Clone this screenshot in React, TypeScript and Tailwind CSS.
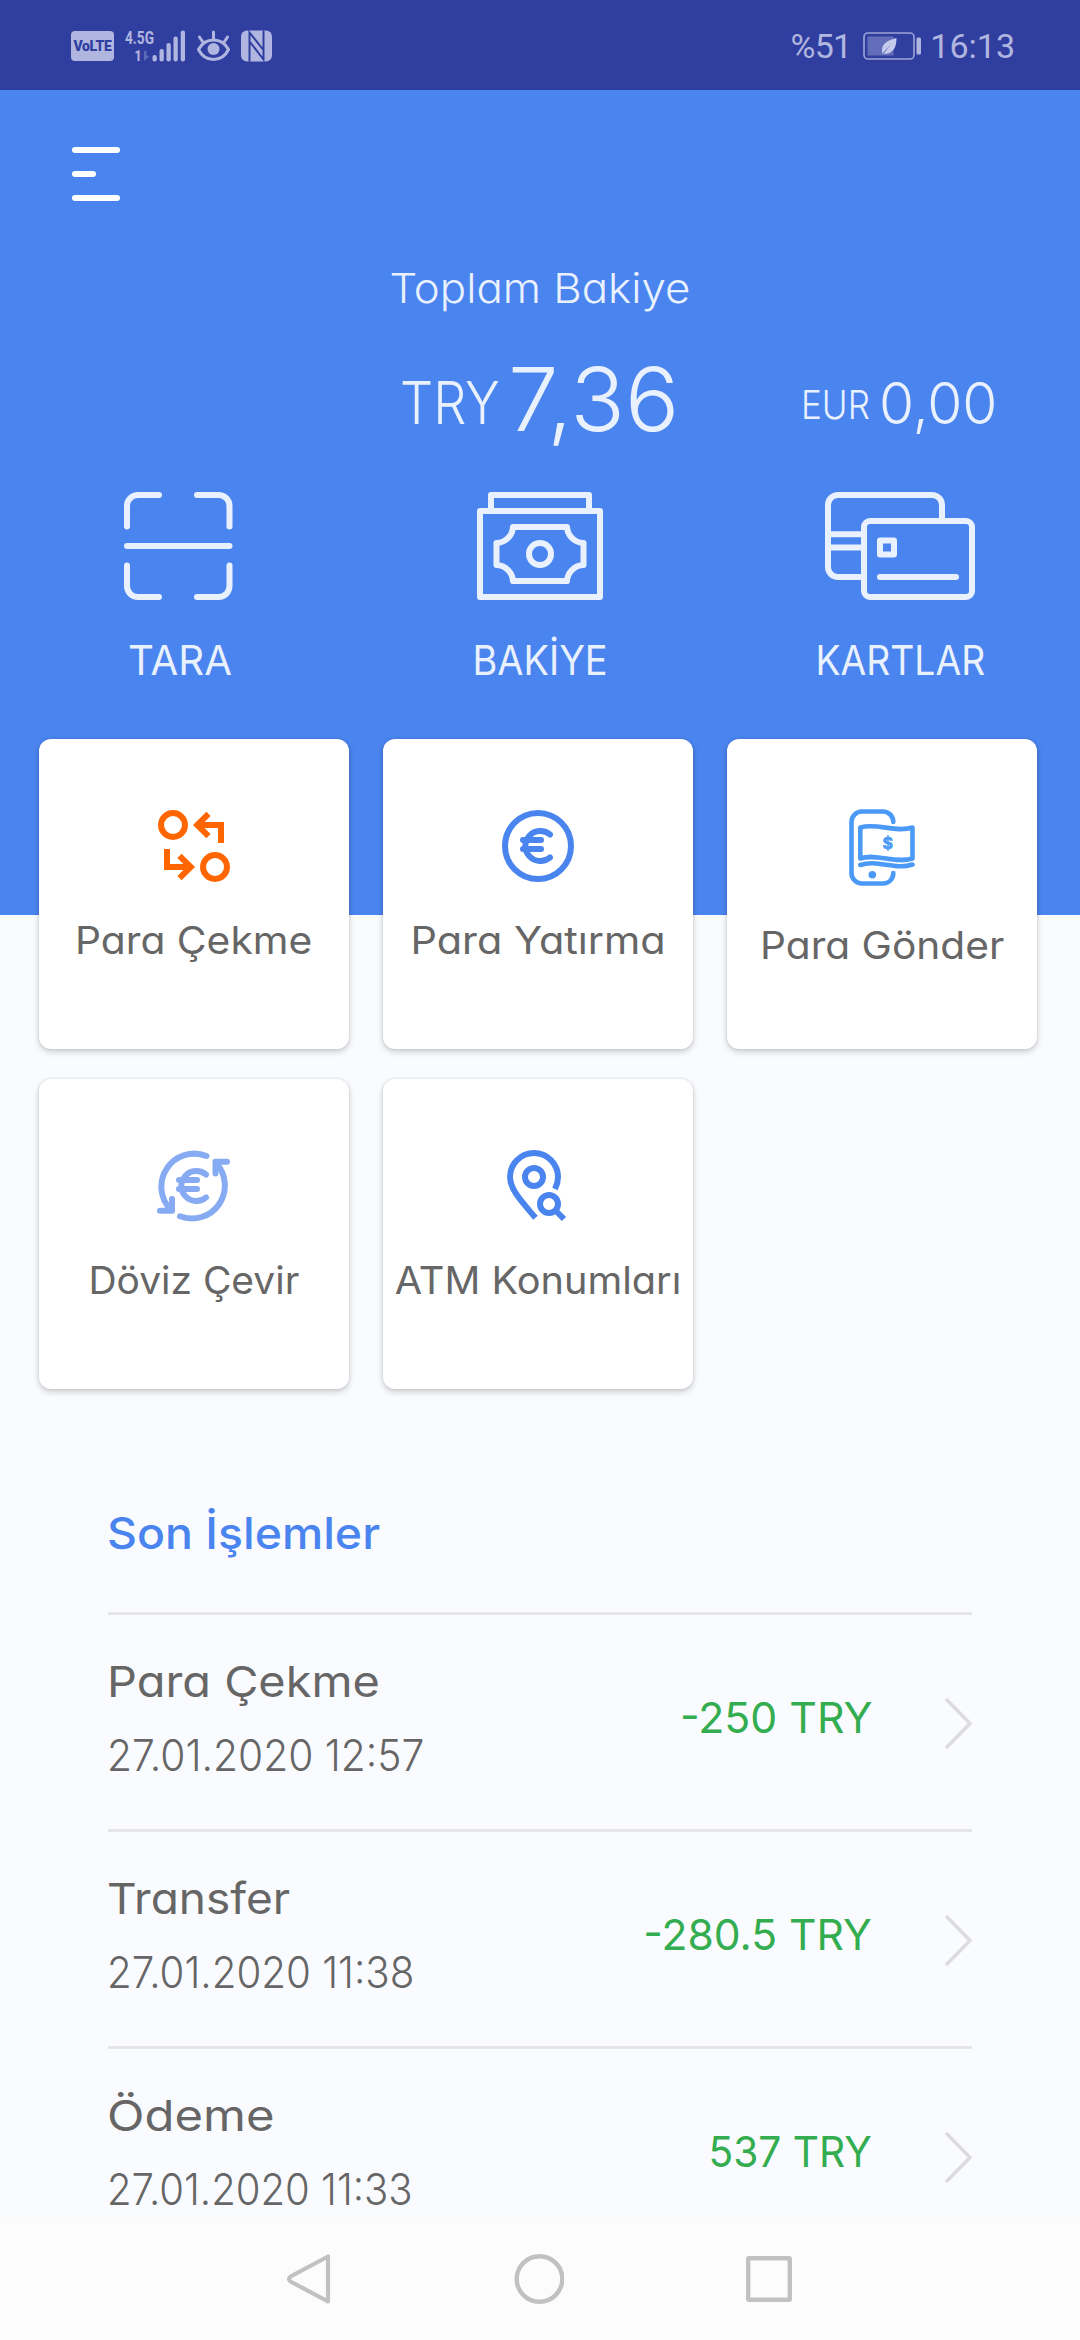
import type { ReactNode } from "react";

const ScanIcon = () => (
  <svg width="112" height="108" viewBox="0 0 112 108" fill="none" stroke="currentColor" strokeWidth="6" strokeLinecap="round" strokeLinejoin="round">
    <path d="M35 3H14A11 11 0 0 0 3 14V34.5M73 3H94.5A11 11 0 0 1 105.5 14V34.5M3 73.5V94A11 11 0 0 0 14 105H35M105.5 73.5V94A11 11 0 0 1 94.5 105H73M3 54H105.5" />
  </svg>
);

const CashIcon = () => (
  <svg width="126" height="108" viewBox="0 0 126 108" fill="none" stroke="currentColor" strokeWidth="6" strokeLinecap="round" strokeLinejoin="round">
    <path d="M14 19V3H112V19M3 19H123V105H3ZM36 35H90A17 17 0 0 0 106.500 51V73A17 17 0 0 0 90 89H36A17 17 0 0 0 19.500 73V51A17 17 0 0 0 36 35Z" />
    <circle cx="63" cy="62" r="11" />
  </svg>
);

const CardsIcon = () => (
  <svg width="150" height="108" viewBox="0 0 150 108" fill="none" stroke="currentColor" strokeWidth="6" strokeLinecap="round" strokeLinejoin="round">
    <path d="M117 28V13A10 10 0 0 0 107 3H13A10 10 0 0 0 3 13V75A10 10 0 0 0 13 85H38M4 42.300H38M4 55.500H38M55 85H131" />
    <rect x="39" y="29" width="108" height="76" rx="6" />
    <rect x="55" y="48.500" width="14" height="14" />
  </svg>
);

const SwapIcon = () => (
  <svg width="72" height="72" viewBox="0 0 72 72" fill="none" stroke="#ff6600" strokeWidth="6">
    <circle cx="15" cy="15" r="12" />
    <circle cx="57" cy="57" r="12" />
    <path d="M63 33V15H40M50.500 3.800L39.200 15L50.500 26.200M9 39V57H32M21.500 45.800L32.800 57L21.500 68.200" />
  </svg>
);

const EuroIcon = () => (
  <svg width="72" height="72" viewBox="0 0 72 72" fill="none" stroke="#4a84ee" strokeWidth="6" strokeLinecap="round">
    <circle cx="36" cy="36" r="33" />
    <path d="M48 24.500A15 15 0 1 0 48 47.500M21 30H39M21 39H39" />
  </svg>
);

const PhoneMoneyIcon = () => (
  <svg width="66" height="77" viewBox="0 0 66 77" fill="none" stroke="#4b9af8" strokeWidth="4.600" strokeLinecap="round" strokeLinejoin="round">
    <path d="M44.300 13C44.300 7 39.500 2.500 34 2.500H13A10.500 10.500 0 0 0 2.500 13V64A10.500 10.500 0 0 0 13 74.500H34C40 74.500 44.300 70 44.300 64" />
    <path d="M11.300 18.500C28 13.500 46 24 63.500 18.500V49.500C46 55 28 44 11.300 49.500Z" />
    <path d="M11.300 56C28 50 46 61.500 63.500 55.500" />
    <circle cx="23.300" cy="65.700" r="3.800" fill="#4b9af8" stroke="none" />
    <text x="38.700" y="39.800" textAnchor="middle" fill="#4b9af8" stroke="#4b9af8" strokeWidth="0.600" className="font-[Inter,sans-serif] text-[16px] font-bold">
      $
    </text>
  </svg>
);

const ExchangeIcon = () => (
  <svg width="75" height="72" viewBox="0 0 75 72" fill="none" stroke="#86abf3" strokeWidth="6" strokeLinecap="round" strokeLinejoin="round">
    <path d="M49.500 6A33 33 0 0 0 14 60M23 66.300A33 33 0 0 0 59 13" />
    <path d="M3 60.700H15V49M70 11.700H58.500V23.500" />
    <path d="M49 24.500A15 15 0 1 0 49 47.500M22 30H40M22 39H40" />
  </svg>
);

const PinSearchIcon = () => (
  <svg width="62" height="72" viewBox="0 0 62 72" fill="none" stroke="#4a84ee" strokeWidth="6">
    <path d="M28.500 67.800C16 53 3 40 3 27A24 24 0 0 1 51 27C51 31 50 35 48 39" />
    <circle cx="27" cy="27" r="9" />
    <circle cx="42" cy="54" r="9" />
    <path d="M48 60L57 69" />
  </svg>
);

const actions = [
  { label: "TARA", icon: <ScanIcon />, scale: "scale-x-[0.98]" },
  { label: "BAKİYE", icon: <CashIcon />, scale: "scale-x-[0.925]" },
  { label: "KARTLAR", icon: <CardsIcon />, scale: "scale-x-[0.91]" },
];

const cards: { label: string; icon: ReactNode; scale: string; space?: string }[] = [
  { label: "Para Çekme", icon: <SwapIcon />, scale: "scale-x-[1.073]" },
  { label: "Para Yatırma", icon: <EuroIcon />, scale: "scale-x-[1.09]" },
  { label: "Para Gönder", icon: <PhoneMoneyIcon />, scale: "scale-x-[1.07]", space: "pt-[70px] gap-[39px]" },
  { label: "Döviz Çevir", icon: <ExchangeIcon />, scale: "scale-x-[1.025]" },
  { label: "ATM Konumları", icon: <PinSearchIcon />, scale: "scale-x-[1.045]" },
];

const transactions = [
  { title: "Para Çekme", titleScale: "scale-x-[1.09]", date: "27.01.2020 12:57", dateScale: "scale-x-[0.948]", amount: "-250 TRY", amountScale: "scale-x-[0.995]" },
  { title: "Transfer", titleScale: "scale-x-[1.07]", date: "27.01.2020 11:38", dateScale: "scale-x-[0.937]", amount: "-280.5 TRY", amountScale: "scale-x-[0.99]" },
  { title: "Ödeme", titleScale: "scale-x-[1.14]", date: "27.01.2020 11:33", dateScale: "scale-x-[0.932]", amount: "537 TRY", amountScale: "scale-x-[0.945]" },
];

function StatusBar() {
  return (
    <div className="flex h-[90px] shrink-0 items-center justify-between bg-[#303f9f] pl-[71px] pr-[65px] font-[Roboto,sans-serif] text-[#b0b6e0]">
      <div className="flex items-center gap-[11px] pt-[2px]">
        <div className="flex h-[30px] w-[43px] items-center justify-center rounded-[4px] bg-[#b0b6e0]">
          <span className="text-[14px] leading-5 font-black tracking-[-0.3px] text-[#303f9f]">VoLTE</span>
        </div>
        <svg width="61" height="32" viewBox="0 0 61 32" fill="currentColor" className="overflow-visible">
          <text x="0" y="14" textLength="29" lengthAdjust="spacingAndGlyphs" className="text-[19px] font-bold">4.5G</text>
          <text x="9.500" y="31" textLength="7" lengthAdjust="spacingAndGlyphs" className="text-[15px] font-black">1</text>
          <path d="M19 21V31L24.500 26L21.500 25.500V21Z" opacity="0.35" />
          <rect x="27.500" y="25" width="4.300" height="6.500" rx="2" />
          <rect x="34.500" y="19" width="4.300" height="12.500" rx="2" />
          <rect x="41.500" y="13" width="4.300" height="18.500" rx="2" />
          <rect x="48.500" y="6.500" width="4.300" height="25" rx="2" />
          <rect x="55.700" y="0.500" width="4.300" height="31" rx="2" />
        </svg>
        <svg width="33" height="32" viewBox="0 0 33 32" fill="none" stroke="currentColor" strokeWidth="3" strokeLinecap="round">
          <path d="M1.500 19.500C5 13 10.500 10 16.500 10S28 13 31.500 19.500C28 26.500 22.500 29.500 16.500 29.500S5 26.500 1.500 19.500ZM16.500 2V9M2.500 7L5.500 11.500M30.500 7L27.500 11.500" />
          <circle cx="16.500" cy="19" r="6" fill="currentColor" stroke="none" />
        </svg>
        <svg width="32" height="32" viewBox="0 0 32 32">
          <rect y="0.500" width="31" height="31" rx="6" fill="currentColor" />
          <path d="M8.500 31.500V2.500L22 19.500M22.500 0.500V29.500L9 12" fill="none" stroke="#303f9f" strokeWidth="2" />
        </svg>
      </div>
      <div className="flex items-center pt-[2px] text-[34px] leading-10">
        <span className="mr-[12px] tracking-[-0.8px]">%51</span>
        <svg width="59" height="28" viewBox="0 0 59 28" className="mr-[8px]">
          <rect x="1" y="1" width="50" height="26" rx="4" fill="none" stroke="currentColor" strokeWidth="1.600" opacity="0.85" />
          <rect x="4.500" y="4.500" width="26" height="19" fill="currentColor" opacity="0.4" />
          <rect x="53.500" y="5.500" width="4.500" height="17" rx="1.500" fill="currentColor" />
          <path d="M33.500 6C26 8 19 11 19 18V22L28 12L20.500 22C30 22 33.500 16 33.500 6Z" fill="#c5caec" />
        </svg>
        <span>16:13</span>
      </div>
    </div>
  );
}

function NavBar() {
  return (
    <div className="flex h-[122px] shrink-0 items-center gap-[180px] bg-[#fcfcfc] pl-[286px] text-[#c1c1c1]">
      <svg width="46" height="52" viewBox="0 0 46 52" fill="none" stroke="currentColor" strokeWidth="4.200" strokeLinejoin="round">
        <path d="M42 3.500V48.500L4.500 28.500Q1.500 26 4.500 23.500Z" />
      </svg>
      <svg width="52" height="52" viewBox="0 0 52 52" fill="none" stroke="currentColor" strokeWidth="4.400">
        <circle cx="27.500" cy="26" r="22.800" />
      </svg>
      <svg width="52" height="52" viewBox="0 0 52 52" fill="none" stroke="currentColor" strokeWidth="4.400" strokeLinejoin="round">
        <rect x="4.200" y="5.200" width="41.600" height="41.600" rx="1" />
      </svg>
    </div>
  );
}

export default function App() {
  return (
    <div className="flex h-[2340px] w-[1080px] flex-col overflow-hidden bg-[#fafbff] font-[Inter,sans-serif] leading-none [font-feature-settings:'cv11']">
      <StatusBar />

      <main className="min-h-0 flex-1 overflow-hidden">
        <header className="h-[825px] bg-[#4a84ee] pt-[57px] text-[#e9f1ff]">
          <button className="ml-[72px] flex flex-col gap-[18px]">
            <span className="h-[6px] w-12 rounded-full bg-white"></span>
            <span className="h-[6px] w-6 rounded-full bg-white"></span>
            <span className="h-[6px] w-12 rounded-full bg-white"></span>
          </button>

          <div className="mt-[57px] flex h-[60px] items-center justify-center">
            <span className="scale-x-[1.068] text-[41px] font-light">Toplam Bakiye</span>
          </div>

          <div className="mt-[37px] flex h-[90px] items-center pl-[400px] whitespace-nowrap">
            <span className="mt-[5px] w-[108px] origin-left scale-x-[0.885] text-[59px] font-light">TRY</span>
            <span className="-mt-[2px] w-[293px] origin-left scale-x-[1.025] text-[88px] font-light">7,36</span>
            <span className="mt-[9px] w-[78px] origin-left scale-x-[0.876] text-[40px] font-light">EUR</span>
            <span className="mt-[5px] origin-left scale-x-[0.98] text-[58px] font-light">0,00</span>
          </div>

          <div className="mt-[47px] grid grid-cols-3">
            {actions.map((a) => (
              <button key={a.label} className="flex flex-col items-center">
                {a.icon}
                <span className={`mt-10 flex h-10 items-center text-[41px] ${a.scale}`}>{a.label}</span>
              </button>
            ))}
          </div>
        </header>

        <div className="-mt-[176px] grid grid-cols-[310px_310px_310px] gap-x-[34px] gap-y-[30px] pl-[39px]">
          {cards.map((c) => (
            <button
              key={c.label}
              className={`flex h-[310px] flex-col items-center rounded-[12px] bg-white shadow-[0_3px_6px_rgba(0,0,0,0.18),0_0_3px_rgba(0,0,0,0.12)] ${c.space ?? "pt-[71px] gap-[38px]"}`}
            >
              {c.icon}
              <span className={`flex h-10 items-center text-[38px] whitespace-nowrap text-[#666666] ${c.scale}`}>{c.label}</span>
            </button>
          ))}
        </div>

        <section className="px-[108px] pt-[114px]">
          <h2 className="-ml-px flex h-[60px] origin-left scale-x-[1.055] items-center text-[44px] font-medium text-[#4a84ee]">Son İşlemler</h2>
          <ul className="mt-[49px]">
            {transactions.map((t) => (
              <li key={t.date} className="flex h-[217px] items-start border-t-[3px] border-[#e6e6e9] text-[43px] whitespace-nowrap text-[#666666]">
                <div className="-ml-px flex flex-1 flex-col items-start pt-[29px]">
                  <span className={`flex h-[74px] origin-left items-center ${t.titleScale}`}>{t.title}</span>
                  <span className={`flex h-[74px] origin-left items-center font-light ${t.dateScale}`}>{t.date}</span>
                </div>
                <span className={`mt-[62px] flex h-20 origin-right items-center text-[#33ad50] ${t.amountScale}`}>{t.amount}</span>
                <svg width="27" height="51" viewBox="0 0 27 51" fill="none" stroke="#dcdcdd" strokeWidth="3.500" strokeLinecap="round" strokeLinejoin="round" className="mt-[83px] ml-[73px]">
                  <path d="M2 2L25 25.500L2 49" />
                </svg>
              </li>
            ))}
          </ul>
        </section>
      </main>

      <NavBar />
    </div>
  );
}
